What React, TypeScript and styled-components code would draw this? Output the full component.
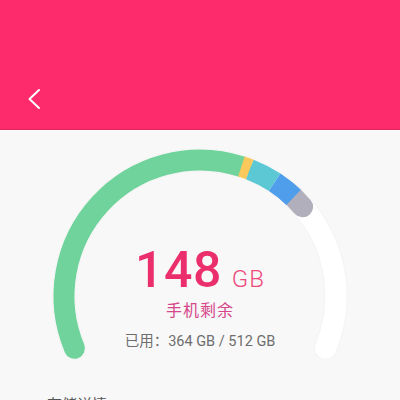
import React from "react";
import styled, { createGlobalStyle } from "styled-components";

const Global = createGlobalStyle`
  html, body { margin: 0; padding: 0; background: #f8f8f8; }
  body { font-family: Roboto, "Noto Sans CJK SC", sans-serif; overflow: hidden; }
`;

const Page = styled.div`
  width: 400px;
  height: 400px;
  display: flex;
  flex-direction: column;
  background: #f8f8f8;
  overflow: hidden;
`;

const Header = styled.header`
  height: 130px;
  flex: none;
  background: #fd2b6c;
  border-bottom: 1px solid #e02a63;
  display: flex;
  align-items: flex-start;
  padding: 88px 0 0 26px;
  box-sizing: border-box;
`;

const BackButton = styled.button`
  border: 0;
  background: transparent;
  padding: 0;
  width: 16px;
  height: 22px;
  display: flex;
  color: #fff;
`;

const GaugeArea = styled.section`
  display: grid;
  justify-items: center;
  flex: none;
`;

const Layer = styled.div`
  grid-area: 1 / 1;
`;

const Readout = styled.div`
  grid-area: 1 / 1;
  display: flex;
  flex-direction: column;
  align-items: center;
  padding-top: 115px;
`;

const ValueRow = styled.div`
  display: flex;
  align-items: baseline;
  gap: 10px;
  color: #ea2f6c;
`;

const Number = styled.span`
  font-family: Roboto, sans-serif;
  font-size: 50px;
  line-height: 50px;
  font-weight: 500;
  letter-spacing: 0.5px;
`;

const Unit = styled.span`
  font-family: Roboto, sans-serif;
  font-size: 24px;
  font-weight: 300;
  letter-spacing: 1px;
  color: #ee4a7e;
`;

const Caption = styled.div`
  margin-top: 6px;
  font-size: 16px;
  line-height: 20px;
  color: #d6478a;
  letter-spacing: 1px;
`;

const Used = styled.div`
  margin-top: 12px;
  font-size: 14.5px;
  line-height: 18px;
  color: #6e6e6e;
  font-family: Roboto, "Noto Sans CJK SC", sans-serif;
`;

const SectionTitle = styled.div`
  padding: 9px 0 0 47px;
  font-size: 15px;
  color: #555;
`;

const CX = 200;
const CY = 166;
const R = 136;
const W = 21;

const pt = (deg: number) => {
  const a = (deg * Math.PI) / 180;
  return [CX + R * Math.cos(a), CY - R * Math.sin(a)];
};

const arc = (a1: number, a2: number) => {
  const [x1, y1] = pt(a1);
  const [x2, y2] = pt(a2);
  const large = a1 - a2 > 180 ? 1 : 0;
  return `M ${x1.toFixed(2)} ${y1.toFixed(2)} A ${R} ${R} 0 ${large} 1 ${x2.toFixed(2)} ${y2.toFixed(2)}`;
};

const START = 202.6;
const END = -22.6;

const segments = [
  { from: START, to: 72.3, color: "#6fd39b", cap: "round" as const },
  { from: 72.3, to: 68.5, color: "#f9c95c", cap: "butt" as const },
  { from: 68.5, to: 56.7, color: "#5cc8d4", cap: "butt" as const },
  { from: 56.7, to: 46.5, color: "#4e9eec", cap: "butt" as const },
];

const Gauge = () => (
  <svg width="400" height="250" viewBox="0 0 400 250">
    <defs>
      <filter id="soft" x="-10%" y="-10%" width="120%" height="120%">
        <feDropShadow dx="0" dy="0" stdDeviation="1.2" floodColor="#000" floodOpacity="0.05" />
      </filter>
    </defs>
    <path d={arc(START, END)} stroke="#ffffff" strokeWidth={W} fill="none" strokeLinecap="round" filter="url(#soft)" />
    <path d={arc(50, 41)} stroke="#b1afbb" strokeWidth={W} fill="none" strokeLinecap="round" />
    {segments.map((s, i) => (
      <path key={i} d={arc(s.from, s.to)} stroke={s.color} strokeWidth={W} fill="none" strokeLinecap={s.cap} />
    ))}
  </svg>
);

export default function App() {
  return (
    <Page>
      <Global />
      <Header>
        <BackButton aria-label="返回">
          <svg width="16" height="22" viewBox="0 0 16 22">
            <path d="M13 2 L3.5 11 L13 20" stroke="#fff" strokeWidth="2" fill="none" strokeLinecap="round" strokeLinejoin="round" />
          </svg>
        </BackButton>
      </Header>
      <GaugeArea>
        <Layer>
          <Gauge />
        </Layer>
        <Readout>
          <ValueRow>
            <Number>148</Number>
            <Unit>GB</Unit>
          </ValueRow>
          <Caption>手机剩余</Caption>
          <Used>已用：364 GB / 512 GB</Used>
        </Readout>
      </GaugeArea>
      <SectionTitle>存储详情</SectionTitle>
    </Page>
  );
}
